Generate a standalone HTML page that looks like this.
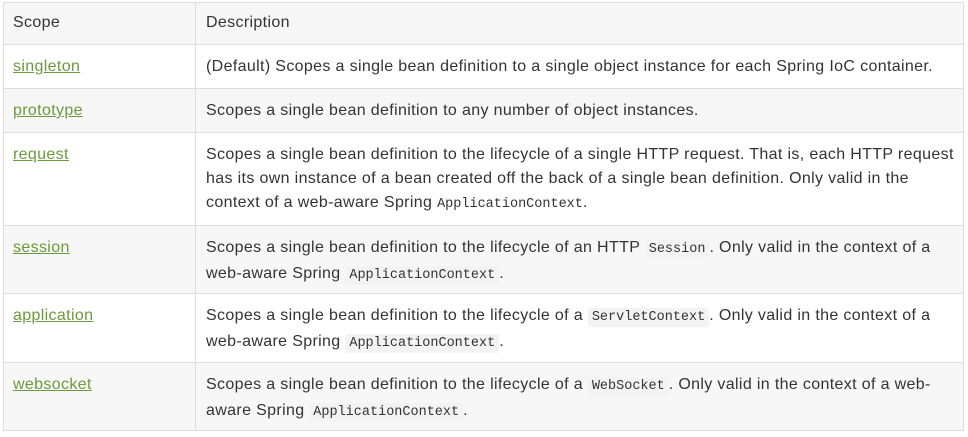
<!DOCTYPE html><html><head><style>
body{margin:0;width:968px;height:437px;background:#fff;font-family:"Liberation Sans",sans-serif;font-size:16px;letter-spacing:0.35px;color:#333;overflow:hidden}
.r{position:absolute;left:3px;width:961px;border-top:1px solid #ddd;box-sizing:border-box}
.g{background:#f7f7f7}
.c1{position:absolute;left:10px;top:10px;line-height:24px}
.c2{position:absolute;left:203px;top:10px;line-height:24px;white-space:nowrap}
.v{position:absolute;left:192px;top:0;bottom:0;border-left:1px solid #ddd}
a{color:#6b9a3b;text-decoration:underline}
code{font-family:"Liberation Mono",monospace;font-size:13.5px;letter-spacing:0;background:#f3f3f3;padding:2px 4px;border-radius:3px;color:#333}
#box{position:absolute;left:3px;top:2px;width:961px;height:429px;border:1px solid #ddd;box-sizing:border-box}
</style></head><body>
<div class="r g" style="top:2px;height:43px"><div class="v"></div><div class="c1" style="top:8px">Scope</div><div class="c2" style="top:8px">Description</div></div>
<div class="r" style="top:44px;height:44px"><div class="v"></div><div class="c1"><a>singleton</a></div><div class="c2">(Default) Scopes a single bean definition to a single object instance for each Spring IoC container.</div></div>
<div class="r g" style="top:88px;height:44px"><div class="v"></div><div class="c1"><a>prototype</a></div><div class="c2">Scopes a single bean definition to any number of object instances.</div></div>
<div class="r" style="top:132px;height:93px"><div class="v"></div><div class="c1"><a>request</a></div><div class="c2">Scopes a single bean definition to the lifecycle of a single HTTP request. That is, each HTTP request<br>has its own instance of a bean created off the back of a single bean definition. Only valid in the<br>context of a web-aware Spring <code style="background:none;padding:0">ApplicationContext</code>.</div></div>
<div class="r g" style="top:225px;height:68px"><div class="v"></div><div class="c1"><a>session</a></div><div class="c2">Scopes a single bean definition to the lifecycle of an HTTP <code>Session</code>. Only valid in the context of a<br>web-aware Spring <code>ApplicationContext</code>.</div></div>
<div class="r" style="top:293px;height:69px"><div class="v"></div><div class="c1"><a>application</a></div><div class="c2">Scopes a single bean definition to the lifecycle of a <code>ServletContext</code>. Only valid in the context of a<br>web-aware Spring <code>ApplicationContext</code>.</div></div>
<div class="r g" style="top:362px;height:69px"><div class="v"></div><div class="c1"><a>websocket</a></div><div class="c2">Scopes a single bean definition to the lifecycle of a <code>WebSocket</code>. Only valid in the context of a web-<br>aware Spring <code>ApplicationContext</code>.</div></div>
<div id="box"></div>
</body></html>
